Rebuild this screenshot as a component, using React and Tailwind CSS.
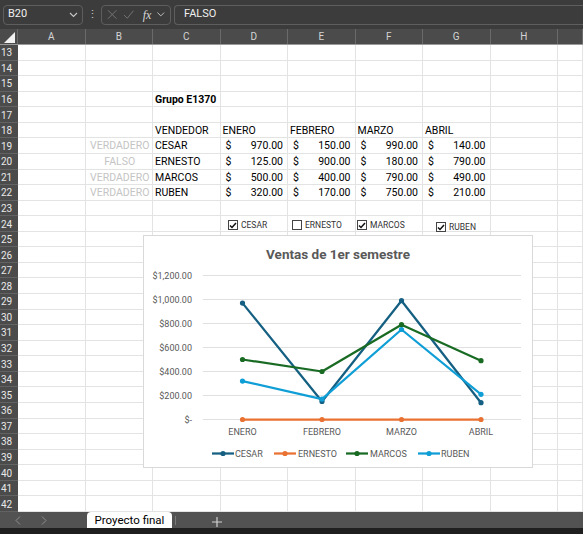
import React from "react";

const COLS = ["A", "B", "C", "D", "E", "F", "G", "H", ""];
const ROWS = Array.from({ length: 30 }, (_, i) => 13 + i);

const money = {
  19: ["970.00", "150.00", "990.00", "140.00"],
  20: ["125.00", "900.00", "180.00", "790.00"],
  21: ["500.00", "400.00", "790.00", "490.00"],
  22: ["320.00", "170.00", "750.00", "210.00"],
};
const names = { 19: "CESAR", 20: "ERNESTO", 21: "MARCOS", 22: "RUBEN" };
const flags = { 19: "VERDADERO", 20: "FALSO", 21: "VERDADERO", 22: "VERDADERO" };

function cellContent(r, c) {
  if (r === 16 && c === 2) return <span className="font-bold">Grupo E1370</span>;
  if (r === 18 && c >= 2 && c <= 6)
    return ["VENDEDOR", "ENERO", "FEBRERO", "MARZO", "ABRIL"][c - 2];
  if (money[r]) {
    if (c === 1) return <span className="w-full text-center text-[#c4c4c4]">{flags[r]}</span>;
    if (c === 2) return names[r];
    if (c >= 3 && c <= 6)
      return (
        <span className="flex w-full justify-between pl-[3px] pr-[4px]">
          <span>$</span>
          <span>{money[r][c - 3]}</span>
        </span>
      );
  }
  return null;
}

function FormulaBar() {
  return (
    <div className="h-[29px] bg-[#3c3c3c] flex items-center pl-[3px] gap-[3px]">
      <div className="w-[80px] h-[20px] rounded-[4px] border border-[#5e5e5e] flex items-center justify-between px-[4px] text-[11px] text-[#f0f0f0]">
        <span>B20</span>
        <svg width="9" height="6" viewBox="0 0 9 6"><path d="M1 1l3.5 3.5L8 1" fill="none" stroke="#c8c8c8" strokeWidth="1.1" /></svg>
      </div>
      <div className="w-[12px] flex justify-center text-[#c8c8c8] text-[11px] leading-none">⋮</div>
      <div className="w-[70px] h-[20px] rounded-[4px] border border-[#5e5e5e] flex items-center px-[5px] gap-[6px]">
        <svg width="11" height="11" viewBox="0 0 11 11"><path d="M1 1l9 9M10 1l-9 9" stroke="#777" strokeWidth="1" /></svg>
        <svg width="12" height="11" viewBox="0 0 12 11"><path d="M1 6l3.5 3.5L11 1.5" fill="none" stroke="#777" strokeWidth="1" /></svg>
        <span className="italic text-[12px] text-[#d8d8d8] leading-none ml-[2px]" style={{ fontFamily: '"Liberation Serif", serif' }}>fx</span>
        <svg width="8" height="5" viewBox="0 0 8 5"><path d="M0.5 0.5l3.5 3.5L7.5 0.5" fill="none" stroke="#c8c8c8" strokeWidth="1" /></svg>
      </div>
      <div className="flex-1 h-[20px] rounded-l-[4px] border border-r-0 border-[#5e5e5e] flex items-center pl-[9px] text-[11px] text-[#f0f0f0]">
        FALSO
      </div>
    </div>
  );
}

function ColumnHeader() {
  return (
    <div className="h-[16px] bg-[#4b4b4b] border-b border-[#9a9a9a] grid grid-cols-[18px_repeat(8,67.5px)_1fr] text-[10px] text-[#d4d4d4]">
      <div className="relative border-r border-[#6a6a6a]">
        <svg className="absolute right-[2px] bottom-[1px]" width="11" height="11" viewBox="0 0 11 11"><path d="M11 0V11H0z" fill="#f2f2f2" /></svg>
      </div>
      {COLS.map((c, i) => (
        <div key={i} className="flex items-center justify-center border-r border-[#6a6a6a]">{c}</div>
      ))}
    </div>
  );
}

function Sheet() {
  return (
    <div className="h-[467px] grid grid-cols-[18px_repeat(8,67.5px)_1fr] grid-rows-[repeat(30,minmax(0,1fr))] text-[10.5px] leading-none text-black overflow-hidden">
      {ROWS.map((r) => (
        <React.Fragment key={r}>
          <div className="bg-[#4b4b4b] border-b border-[#626262] text-[#e8e8e8] text-[10px] flex items-center pl-[1px] pt-[2px]">{r}</div>
          {COLS.map((_, c) => (
            <div key={c} className="bg-white border-r border-b border-[#e3e3e3] flex items-center pl-[2px] pt-[2px] whitespace-nowrap">
              {cellContent(r, c)}
            </div>
          ))}
        </React.Fragment>
      ))}
    </div>
  );
}

function Check({ checked, label, className }) {
  return (
    <div className={"absolute flex items-center gap-[3px] text-[8.5px] text-[#333] " + className}>
      <div className="w-[10px] h-[10px] border border-[#444] bg-white flex items-center justify-center">
        {checked && <svg width="8" height="7" viewBox="0 0 8 7"><path d="M1 3.5l2 2L7 1" fill="none" stroke="#111" strokeWidth="1.5" /></svg>}
      </div>
      <span>{label}</span>
    </div>
  );
}

const XS = [98.5, 178, 257.5, 337];
const yOf = (v) => 183.5 - v * 0.12;
const SERIES = [
  { name: "CESAR", color: "#156082", vals: [970, 150, 990, 140] },
  { name: "ERNESTO", color: "#E97132", vals: [0, 0, 0, 0] },
  { name: "MARCOS", color: "#196B24", vals: [500, 400, 790, 490] },
  { name: "RUBEN", color: "#0F9ED5", vals: [320, 170, 750, 210] },
];
const TICKS = ["$-", "$200.00", "$400.00", "$600.00", "$800.00", "$1,000.00", "$1,200.00"];
const LEGEND = [
  { x: 68, tx: 91 },
  { x: 130, tx: 154 },
  { x: 202, tx: 226 },
  { x: 274, tx: 297 },
];

function Chart() {
  return (
    <div className="absolute left-[143px] top-[235px] w-[390px] h-[233px] bg-white border border-[#d9d9d9]">
      <div className="pt-[8px] text-center text-[13.5px] font-bold text-[#595959]">Ventas de 1er semestre</div>
      <svg className="absolute left-0 top-0" width="390" height="233" viewBox="0 0 390 233" style={{ fontFamily: "Roboto, sans-serif" }}>
        {TICKS.map((t, i) => (
          <g key={t}>
            <line x1="59" x2="377" y1={183.5 - i * 24} y2={183.5 - i * 24} stroke="#e0e0e0" strokeWidth="1" />
            <text x="48" y={183.5 - i * 24 + 3} textAnchor="end" fontSize="9" fill="#595959">{t}</text>
          </g>
        ))}
        {["ENERO", "FEBRERO", "MARZO", "ABRIL"].map((m, i) => (
          <text key={m} x={XS[i]} y="199" textAnchor="middle" fontSize="9" fill="#595959">{m}</text>
        ))}
        {SERIES.map((s) => (
          <g key={s.name}>
            <polyline points={s.vals.map((v, i) => `${XS[i]},${yOf(v)}`).join(" ")} fill="none" stroke={s.color} strokeWidth="2.25" strokeLinejoin="round" />
            {s.vals.map((v, i) => (
              <circle key={i} cx={XS[i]} cy={yOf(v)} r="2.6" fill={s.color} />
            ))}
          </g>
        ))}
        {SERIES.map((s, i) => (
          <g key={"l" + s.name}>
            <line x1={LEGEND[i].x} x2={LEGEND[i].x + 22} y1="217.5" y2="217.5" stroke={s.color} strokeWidth="2.25" />
            <circle cx={LEGEND[i].x + 11} cy="217.5" r="2.6" fill={s.color} />
            <text x={LEGEND[i].tx} y="220.5" fontSize="9" fill="#595959">{s.name}</text>
          </g>
        ))}
      </svg>
    </div>
  );
}

function TabBar() {
  return (
    <div>
      <div className="h-[16px] bg-[#525252] flex items-end">
        <div className="w-[87px] h-full flex items-center pl-[15px] gap-[20px]">
          <svg width="6" height="9" viewBox="0 0 6 9"><path d="M5 0.5L1 4.5l4 4" fill="none" stroke="#8c8c8c" strokeWidth="1" /></svg>
          <svg width="6" height="9" viewBox="0 0 6 9"><path d="M1 0.5l4 4-4 4" fill="none" stroke="#8c8c8c" strokeWidth="1" /></svg>
        </div>
        <div className="w-[85px] h-[16px] bg-white rounded-t-[4px] flex items-center justify-center pt-[2px] text-[11.5px] text-black">Proyecto final</div>
        <div className="ml-[3px] w-px h-[9px] bg-[#7a7a7a] self-center" />
        <svg className="ml-[36px] self-center mt-[3px]" width="10" height="10" viewBox="0 0 10 10"><path d="M5 0v10M0 5h10" stroke="#d0d0d0" strokeWidth="1.2" /></svg>
      </div>
      <div className="h-[6px] bg-[#1f1f1f]" />
    </div>
  );
}

export default function App() {
  return (
    <div className="relative w-[583px] h-[534px] overflow-hidden bg-white" style={{ fontFamily: "Roboto, sans-serif" }}>
      <FormulaBar />
      <ColumnHeader />
      <Sheet />
      <TabBar />
      <Check checked label="CESAR" className="left-[228px] top-[219px]" />
      <Check label="ERNESTO" className="left-[292px] top-[219px]" />
      <Check checked label="MARCOS" className="left-[357px] top-[219px]" />
      <Check checked label="RUBEN" className="left-[436px] top-[221px]" />
      <Chart />
    </div>
  );
}
